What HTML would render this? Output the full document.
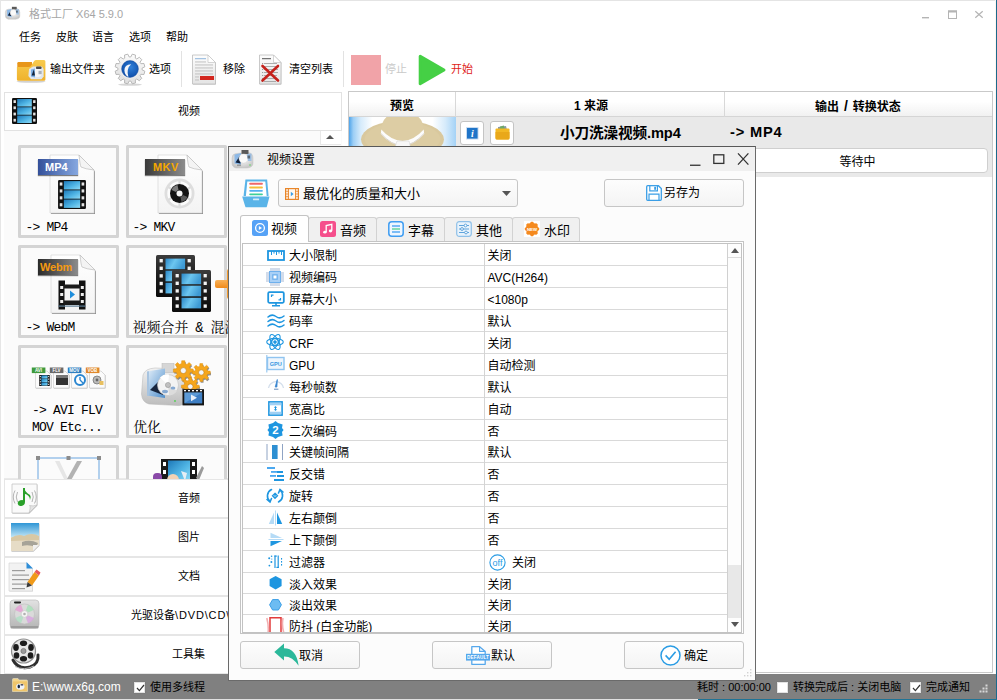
<!DOCTYPE html>
<html lang="zh-CN">
<head>
<meta charset="utf-8">
<title>格式工厂 X64 5.9.0</title>
<style>
*{box-sizing:border-box;margin:0;padding:0}
html,body{width:997px;height:700px;overflow:hidden;background:#fff}
body{position:relative;font-family:"Liberation Sans","Noto Sans CJK SC",sans-serif;font-size:11px;color:#000;line-height:1}
.a{position:absolute}
.t{position:absolute;white-space:nowrap;line-height:14px;height:14px}
svg{position:absolute;overflow:visible}
/* window frame */
#bt{left:0;top:0;width:996px;height:1px;background:#e4e4e4}
#bl{left:0;top:0;width:1px;height:674px;background:#e6e6e6}
#br{left:996px;top:0;width:1px;height:700px;background:#1b6a8c}
#br2{left:995px;top:0;width:1px;height:674px;background:#fdf6f2}
#bb{left:698px;top:699px;width:299px;height:1px;background:#1f7496}
#bb2{left:0;top:699px;width:698px;height:1px;background:#e0e0e0}
#title{left:29px;top:7px;color:#a6a6a6;font-size:11px}
.menu{top:30px;font-size:11px}
.tb{top:62px;font-size:11px}
.sep{width:1px;top:51px;height:36px;background:#e2e2e2}
/* left panel */
#vhead{left:4px;top:92px;width:338px;height:39px;border:1px solid #e2e2e2;background:#fff}
#pbody{left:4px;top:131px;width:338px;height:348px;background:#fbfbfb;border-bottom:1px solid #eaeaea}
.tile{width:101px;height:93px;border:3px solid #d4d4d4;background:#fbfbfb;border-radius:1.5px;overflow:hidden}
.tl{position:absolute;white-space:nowrap;font-family:"Liberation Mono","Noto Serif CJK SC",monospace;font-size:13px;letter-spacing:-0.8px;line-height:14px;color:#000}
.tc{position:absolute;white-space:nowrap;font-family:"Liberation Mono","Noto Serif CJK SC",serif;font-size:14px;line-height:16px;color:#000}
.cat{left:4px;width:338px;height:39px;border:1px solid #e6e6e6;background:#fff}
.catt{font-size:11px}
/* status */
#status{left:0;top:674px;width:996px;height:25px;background:#808080}
.cb{width:11px;height:11px;background:#fff;border:1px solid #e2e2e2;top:682px;box-shadow:0 0 1px #6e6e6e}
/* table */
#table{left:348px;top:91px;width:645px;height:582px;border:1px solid #c9c9c9;background:#fff}
#thead{left:349px;top:92px;width:643px;height:25px;background:linear-gradient(#fff 40%,#f1f1f1);border-bottom:1px solid #d5d5d5}
.th{top:98.5px;font-weight:bold;font-size:12px}
.cs{top:92px;width:1px;height:25px;background:#d8d8d8}
#row{left:349px;top:117px;width:643px;height:60px;background:#e9e9e9}
.sbtn{width:24px;height:24px;top:121px;background:#fff;border:1px solid #c4c4c4;border-radius:3px}
/* dialog */
#dlg{left:228px;top:146px;width:528px;height:535px;border:1px solid #6a6a6a;border-top-color:#585858;background:#fcfcfc}
#dtitle{left:229px;top:147px;width:526px;height:24px;background:#f0f0f0}
.btn{border:1px solid #c6c6c6;border-radius:3px;background:linear-gradient(#fdfdfd,#f4f4f4)}
.tab{top:217px;height:24px;border:1px solid #d2d2d2;border-bottom:none;background:#f0f0f0;border-radius:3px 3px 0 0}
.tabt{font-size:13px;top:222px;line-height:15px;height:15px}
#list{left:242px;top:243px;width:500px;height:390px;border:1px solid #c2c2c2;background:#fff;overflow:hidden}
.r{position:absolute;left:0;width:484px;border-bottom:1px solid #d9d9d9;height:22px}
.r .k{position:absolute;left:46px;top:4px;font-size:12px;line-height:16px;white-space:nowrap}
.r .v{position:absolute;left:244.5px;top:4px;font-size:12px;line-height:16px;white-space:nowrap}
.r svg{left:24px;top:2px}
</style>
</head>
<body>
<!-- frame -->
<div class="a" id="bt"></div><div class="a" id="bl"></div><div class="a" id="br2"></div><div class="a" id="br"></div>

<!-- TITLEBAR -->
<div class="t" id="title">格式工厂 X64 5.9.0</div>


<!-- title icon -->
<svg style="left:4.2px;top:5.6px" width="16.5" height="14" viewBox="0 0 24 20">
 <defs><radialGradient id="tig" cx="50%" cy="40%" r="65%"><stop offset="0" stop-color="#ffffff"/><stop offset="1" stop-color="#c2c2c2"/></radialGradient></defs>
 <path d="M2 9 Q2 5 6 4.5 L18 3.5 Q23 4 23 9 L23 14 Q23 18.5 17 19 L6 19 Q1.5 18 2 13 Z" fill="url(#tig)" stroke="#c4c4c4" stroke-width=".6"/>
 <rect x="11.5" y="1" width="7" height="4" fill="#5a5a5a"/>
 <path d="M4.5 5.5 L11 4 L11 16 L4.5 14.5 Z" fill="#8cb8e6"/>
 <path d="M5.5 13.5 L10 6.5 L10.5 14.5 Z" fill="#10203a"/>
 <circle cx="13.5" cy="9.5" r="4.6" fill="#fafafa" stroke="#d0d0d0" stroke-width=".5"/>
 <path d="M17 5 L21.5 4.5 L21.5 12 L18 12 Z" fill="#8cb8e6" opacity=".8"/>
 <rect x="17.5" y="6.5" width="2.6" height="3" fill="#5a6a7a"/>
</svg>
<!-- window controls -->
<svg style="left:915px;top:5px" width="75" height="20" viewBox="0 0 75 20">
 <rect x="7" y="12" width="7" height="1.4" fill="#b4b4b4"/>
 <rect x="33.5" y="6" width="8" height="7.5" fill="none" stroke="#b4b4b4" stroke-width="1"/>
 <rect x="33" y="5.5" width="9" height="2" fill="#b4b4b4"/>
 <path d="M60.3 6.3 L67.7 12.7 M67.7 6.3 L60.3 12.7" stroke="#b4b4b4" stroke-width="1.2" fill="none"/>
</svg>

<!-- toolbar: folder -->
<svg style="left:16px;top:59px" width="31" height="24" viewBox="0 0 31 24">
 <defs><linearGradient id="fg1" x1="0" y1="0" x2="0" y2="1"><stop offset="0" stop-color="#f8cb4e"/><stop offset="1" stop-color="#efb22c"/></linearGradient></defs>
 <ellipse cx="15" cy="22.6" rx="14.5" ry="1.2" fill="#000" opacity=".18"/>
 <path d="M1.3 4.2 Q1.3 3 2.5 3 L16 3 L16 9 L1.3 9 Z" fill="#e8961a"/>
 <path d="M.9 8 L12.6 8 Q14.3 8 15.3 6.4 L17.8 2.4 Q18.8 1 20.4 1 L28 1 Q29.4 1 29.4 2.5 L29.4 20.4 Q29.4 21.8 28 21.8 L2.4 21.8 Q.9 21.8 .9 20.4 Z" fill="url(#fg1)"/>
 <path d="M13 10 L17 7.6 L26 7.6 L27.6 10 L27.6 17.5 L25.5 20.2 L15 20.2 L12.4 17 Z" fill="#dfe6ee"/>
 <ellipse cx="21.5" cy="13.6" rx="4.6" ry="4.4" fill="#f6f6f6"/>
 <path d="M15 10.5 L19 9.5 L19 18.5 L15 17.5 Z" fill="#7fb2e6"/>
 <path d="M15.6 16.5 L17.8 10.6 L19 16.5 Z" fill="#14243a"/>
 <rect x="20" y="7.4" width="5.5" height="2.6" rx=".8" fill="#4a4a4a"/>
 <rect x="22.5" y="11.8" width="3.2" height="3.4" fill="#a0a8b0" opacity=".9"/>
</svg>
<!-- toolbar: gear -->
<svg style="left:114px;top:53px" width="32" height="33" viewBox="-16 -16 32 33">
 <defs><radialGradient id="gg1" cx="55%" cy="40%" r="65%"><stop offset="0" stop-color="#2f7fd8"/><stop offset="1" stop-color="#0b4aa6"/></radialGradient>
 <linearGradient id="gg2" x1="0" y1="0" x2="0" y2="1"><stop offset="0" stop-color="#fbfbfb"/><stop offset="1" stop-color="#dedede"/></linearGradient></defs>
 <ellipse cx="0" cy="15.6" rx="12" ry="1.2" fill="#000" opacity=".16"/>
 <path d="M-2.31 -11.88 L-1.70 -14.90 L1.70 -14.90 L2.31 -11.88 L3.94 -11.44 L5.98 -13.76 L8.92 -12.06 L7.94 -9.13 L9.13 -7.94 L12.06 -8.92 L13.76 -5.98 L11.44 -3.94 L11.88 -2.31 L14.90 -1.70 L14.90 1.70 L11.88 2.31 L11.44 3.94 L13.76 5.98 L12.06 8.92 L9.13 7.94 L7.94 9.13 L8.92 12.06 L5.98 13.76 L3.94 11.44 L2.31 11.88 L1.70 14.90 L-1.70 14.90 L-2.31 11.88 L-3.94 11.44 L-5.98 13.76 L-8.92 12.06 L-7.94 9.13 L-9.13 7.94 L-12.06 8.92 L-13.76 5.98 L-11.44 3.94 L-11.88 2.31 L-14.90 1.70 L-14.90 -1.70 L-11.88 -2.31 L-11.44 -3.94 L-13.76 -5.98 L-12.06 -8.92 L-9.13 -7.94 L-7.94 -9.13 L-8.92 -12.06 L-5.98 -13.76 L-3.94 -11.44 Z" fill="url(#gg2)" stroke="#b0b0b0" stroke-width=".8" stroke-linejoin="round" transform="rotate(15)"/>
 <circle r="9.6" fill="#f2f2f2"/>
 <circle r="8.4" fill="url(#gg1)" stroke="#1a4f9c" stroke-width=".5"/>
 <path d="M1.2 -4.8 Q-5.8 -4.4 -5.6 1.5 Q-5.2 6.4 -1.6 8 Q-2.8 4 -2.2 1 Q-1.6 -2.6 1.2 -4.8 Z" fill="#f4f6fa"/>
</svg>
<!-- toolbar: remove doc -->
<svg style="left:191px;top:54px" width="26" height="32" viewBox="0 0 26 32">
 <defs><linearGradient id="dg1" x1="0" y1="0" x2="0" y2="1"><stop offset="0" stop-color="#fdfdfd"/><stop offset="1" stop-color="#e4e4e4"/></linearGradient></defs>
 <path d="M1.5 1 L17 1 L24.5 8.5 L24.5 30 L1.5 30 Z" fill="#000" opacity=".18" transform="translate(.4 .8)"/>
 <path d="M1.5 1 L17 1 L24.5 8.5 L24.5 30 L1.5 30 Z" fill="url(#dg1)" stroke="#bdbdbd" stroke-width=".8"/>
 <path d="M17 1 L17 8.5 L24.5 8.5 Z" fill="#fff" stroke="#c4c4c4" stroke-width=".7"/>
 <rect x="4" y="4.2" width="11" height="1" fill="#8fb6dc"/>
 <g fill="#bcbcbc"><rect x="4" y="7.5" width="11" height=".9"/><rect x="4" y="10.5" width="18" height=".9"/><rect x="4" y="13.5" width="18" height=".9"/><rect x="4" y="16.5" width="18" height=".9"/><rect x="4" y="19.5" width="18" height=".9"/><rect x="4" y="22.5" width="4" height=".9"/><rect x="4" y="25.5" width="4" height=".9"/></g>
 <rect x="9" y="22" width="14" height="4" fill="#d3271f"/>
</svg>
<!-- toolbar: clear doc -->
<svg style="left:258px;top:54px" width="25" height="32" viewBox="0 0 25 32">
 <path d="M1.5 1 L15.5 1 L23 8.5 L23 30 L1.5 30 Z" fill="#000" opacity=".18" transform="translate(.4 .8)"/>
 <path d="M1.5 1 L15.5 1 L23 8.5 L23 30 L1.5 30 Z" fill="url(#dg1)" stroke="#bdbdbd" stroke-width=".8"/>
 <path d="M15.5 1 L15.5 8.5 L23 8.5 Z" fill="#fff" stroke="#c4c4c4" stroke-width=".7"/>
 <rect x="4" y="4.2" width="9" height="1" fill="#555"/>
 <g fill="#9a9a9a"><rect x="4" y="9" width="1.2" height="1"/><rect x="6" y="9" width="13" height=".8"/><rect x="4" y="12" width="1.2" height="1"/><rect x="6" y="12" width="13" height=".8"/><rect x="4" y="15" width="1.2" height="1"/><rect x="6" y="15" width="14" height=".8"/><rect x="4" y="18" width="1.2" height="1"/><rect x="6" y="18" width="14" height=".8"/><rect x="4" y="21" width="1.2" height="1"/><rect x="6" y="21" width="13" height=".8"/><rect x="4" y="24" width="1.2" height="1"/><rect x="6" y="24" width="11" height=".8"/><rect x="4" y="27" width="1.2" height="1"/><rect x="6" y="27" width="12" height=".8"/></g>
 <path d="M4.5 12 L20 26.5 M20 12 L4.5 26.5" stroke="#c5221c" stroke-width="2.6" stroke-linecap="round" fill="none"/>
</svg>
<!-- toolbar: play -->
<svg style="left:418px;top:54px" width="29" height="32" viewBox="0 0 29 32">
 <path d="M2.2 2.2 L26 16 L2.2 29.8 Z" fill="#45d045" stroke="#45d045" stroke-width="3" stroke-linejoin="round"/>
</svg>

<!-- MENU -->
<div class="t menu" style="left:19px">任务</div>
<div class="t menu" style="left:56px">皮肤</div>
<div class="t menu" style="left:92px">语言</div>
<div class="t menu" style="left:129px">选项</div>
<div class="t menu" style="left:166px">帮助</div>

<!-- TOOLBAR -->
<div class="t tb" style="left:50px">输出文件夹</div>
<div class="t tb" style="left:149px">选项</div>
<div class="a sep" style="left:181px"></div>
<div class="t tb" style="left:223px">移除</div>
<div class="t tb" style="left:289px">清空列表</div>
<div class="a sep" style="left:343px"></div>
<div class="a" style="left:351px;top:55px;width:30px;height:30px;background:#f1a3a8"></div>
<div class="t tb" style="left:385px;color:#c9c9c9">停止</div>
<div class="t tb" style="left:451px;color:#e0241b">开始</div>

<!-- LEFT PANEL -->
<div class="a" id="pbody"></div>
<div class="a" id="vhead"></div>
<div class="t catt" style="left:178px;top:104px">视频</div>


<svg width="0" height="0" style="left:0;top:0">
 <defs>
  <linearGradient id="fb" x1="0" y1="0" x2="1" y2="1"><stop offset="0" stop-color="#1d78b8"/><stop offset=".55" stop-color="#4fb4e4"/><stop offset="1" stop-color="#8fdaf6"/></linearGradient>
  <linearGradient id="pg" x1="0" y1="0" x2="0" y2="1"><stop offset="0" stop-color="#ffffff"/><stop offset="1" stop-color="#f3f3f3"/></linearGradient>
  <linearGradient id="bdg" x1="0" y1="0" x2="1" y2="0"><stop offset="0" stop-color="#2a2a2a"/><stop offset="1" stop-color="#8a8a8a"/></linearGradient>
  <linearGradient id="bdb" x1="0" y1="0" x2="1" y2="0"><stop offset="0" stop-color="#34509a"/><stop offset="1" stop-color="#7da0dc"/></linearGradient>
  <linearGradient id="fb2" x1="0" y1="0" x2="1" y2="0.3"><stop offset="0" stop-color="#2a86c6"/><stop offset=".5" stop-color="#6cc6f0"/><stop offset="1" stop-color="#3e9ad4"/></linearGradient>
  <linearGradient id="fk" x1="0" y1="0" x2="0" y2="1"><stop offset="0" stop-color="#3c3c3c"/><stop offset=".5" stop-color="#1c1c1c"/><stop offset="1" stop-color="#0c0c0c"/></linearGradient>
  <symbol id="film5" viewBox="0 0 39 42">
   <rect x="0" y="0" width="39" height="42" rx="1.5" fill="url(#fk)"/>
   <g fill="#f4f4f4"><rect x="3.6" y="4.0" width="3.2" height="3.4"/><rect x="31.6" y="4.0" width="3.2" height="3.4"/><rect x="3.6" y="11.6" width="3.2" height="3.4"/><rect x="31.6" y="11.6" width="3.2" height="3.4"/><rect x="3.6" y="19.2" width="3.2" height="3.4"/><rect x="31.6" y="19.2" width="3.2" height="3.4"/><rect x="3.6" y="26.8" width="3.2" height="3.4"/><rect x="31.6" y="26.8" width="3.2" height="3.4"/><rect x="3.6" y="34.4" width="3.2" height="3.4"/><rect x="31.6" y="34.4" width="3.2" height="3.4"/></g>
   <g fill="url(#fb2)"><rect x="9.5" y="3.6" width="19.6" height="10.6"/><rect x="9.5" y="15.7" width="19.6" height="10.6"/><rect x="9.5" y="27.8" width="19.6" height="10.6"/></g>
  </symbol>
  <symbol id="film" viewBox="0 0 25 26">
   <rect x="0" y="0" width="25" height="26" rx="1.2" fill="#101010"/>
   <g fill="#e4e4e4"><rect x="1.5" y="2.2" width="2.4" height="2.8"/><rect x="1.5" y="8.4" width="2.4" height="2.8"/><rect x="1.5" y="14.6" width="2.4" height="2.8"/><rect x="1.5" y="20.8" width="2.4" height="2.8"/>
   <rect x="21.1" y="2.2" width="2.4" height="2.8"/><rect x="21.1" y="8.4" width="2.4" height="2.8"/><rect x="21.1" y="14.6" width="2.4" height="2.8"/><rect x="21.1" y="20.8" width="2.4" height="2.8"/></g>
   <g fill="url(#fb)"><rect x="5.2" y="1" width="14.6" height="7.5"/><rect x="5.2" y="9.25" width="14.6" height="7.5"/><rect x="5.2" y="17.5" width="14.6" height="7.5"/></g>
  </symbol>
  <symbol id="page" viewBox="0 0 46 60">
   <path d="M1 1 L30 1 L45 16 L45 59 L1 59 Z" fill="#000" opacity=".42" transform="translate(1 1.2)"/>
   <path d="M1 1 L30 1 Q33 9 45 16 L45 59 L1 59 Z" fill="url(#pg)" stroke="#d0d0d0" stroke-width=".6"/>
   <path d="M30 1 Q31 11 32 13 Q36 15 45 16 Z" fill="#f4f4f4" stroke="#bdbdbd" stroke-width=".7"/>
  </symbol>
 </defs>
</svg>
<svg style="left:11.5px;top:97.5px" width="25" height="26"><use href="#film" width="25" height="26"/></svg>
<div class="a" style="left:320px;top:131px;width:21px;height:14px;background:#fff;border-bottom:1px solid #e8e8e8;border-left:1px solid #e8e8e8"></div>
<svg style="left:326px;top:135px" width="8" height="4" viewBox="0 0 8 4"><path d="M0 4 L4 0 L8 4 Z" fill="#555"/></svg>
<div class="a tile" style="left:18px;top:145px"></div>
<div class="a tile" style="left:126px;top:145px"></div>
<div class="a tile" style="left:18px;top:245px"></div>
<div class="a tile" style="left:126px;top:245px"></div>
<div class="a tile" style="left:18px;top:345px"></div>
<div class="a tile" style="left:126px;top:345px"></div>
<div class="a tile" style="left:18px;top:445px"></div>
<div class="a tile" style="left:126px;top:445px"></div>

<svg style="left:49px;top:153.5px" width="47" height="61"><use href="#page" width="46" height="60"/></svg>
<div class="a" style="left:37.5px;top:159px;width:40px;height:16px;background:linear-gradient(90deg,#34509a,#86a8e0);box-shadow:0 1px 1px rgba(0,0,0,.5)"></div>
<div class="t" style="left:45px;top:160px;color:#fff;font-weight:bold;font-size:11px">MP4</div>
<svg style="left:58px;top:180px" width="28" height="29"><use href="#film" width="28" height="29"/></svg>
<div class="tl" style="left:25.5px;top:221px">-&gt; MP4</div>

<svg style="left:157px;top:153.5px" width="47" height="61"><use href="#page" width="46" height="60"/></svg>
<div class="a" style="left:145px;top:159px;width:40px;height:16px;background:linear-gradient(90deg,#3a3a3a,#8c8c8c);box-shadow:0 1px 1px rgba(0,0,0,.5)"></div>
<div class="t" style="left:153px;top:160px;color:#f5a800;font-weight:bold;font-size:11px;letter-spacing:.4px">MKV</div>
<svg style="left:164px;top:178px" width="31" height="31" viewBox="-15.5 -15.5 31 31">
 <circle r="13.6" fill="#fbfbfb" stroke="#dedede" stroke-width="2.8"/>
 <g stroke="#dcdcdc" stroke-width="2.2"><path d="M0 -13 L0 13 M-11.3 -6.5 L11.3 6.5 M-11.3 6.5 L11.3 -6.5"/></g>
 <circle r="9.5" fill="#141414"/>
 <path d="M-8 -3.5 A8.8 8.8 0 0 1 -2 -8.5 L-1 -3.6 A3.6 3.6 0 0 0 -3.4 -1.6 Z" fill="#7c7c7c"/>
 <path d="M8 3.5 A8.8 8.8 0 0 1 2 8.5 L1 3.6 A3.6 3.6 0 0 0 3.4 1.6 Z" fill="#5a5a5a"/>
 <circle r="3" fill="#f6f6f6"/>
</svg>
<div class="tl" style="left:132.5px;top:221px">-&gt; MKV</div>

<svg style="left:49.5px;top:254px" width="47" height="61"><use href="#page" width="46" height="60"/></svg>
<div class="a" style="left:37.5px;top:259px;width:40px;height:16px;background:linear-gradient(90deg,#2a2a2a,#8c8c8c);box-shadow:0 1px 1px rgba(0,0,0,.5)"></div>
<div class="t" style="left:40px;top:260px;color:#f59a12;font-weight:bold;font-size:11px;letter-spacing:-.2px">Webm</div>
<svg style="left:58px;top:279.5px" width="28" height="30" viewBox="0 0 28 30">
 <rect x="0.5" y="0.5" width="6.5" height="29" fill="#111"/><rect x="21" y="0.5" width="6.5" height="29" fill="#111"/>
 <rect x="6" y="4.5" width="16" height="20.5" fill="#1a1a1a"/>
 <rect x="6.5" y="8.5" width="15" height="12" fill="#f4f4f4"/>
 <path d="M12 10.5 L17 14.5 L12 18.5 Z" fill="#1e8edc"/>
 <g fill="#eee"><rect x="2.2" y="6" width="3" height="3"/><rect x="2.2" y="13" width="3" height="3"/><rect x="2.2" y="20" width="3" height="3"/><rect x="22.8" y="6" width="3" height="3"/><rect x="22.8" y="13" width="3" height="3"/><rect x="22.8" y="20" width="3" height="3"/></g>
 <rect x="0.5" y="25.5" width="27" height="1.2" fill="#5a7a92"/>
</svg>
<div class="tl" style="left:25.5px;top:321px">-&gt; WebM</div>

<svg style="left:156.3px;top:255.2px" width="39" height="42"><use href="#film5" width="39" height="42"/></svg>
<svg style="left:172px;top:270.2px" width="39" height="42"><use href="#film5" width="39" height="42"/></svg>
<div class="a" style="left:215.4px;top:279.5px;width:14px;height:8.5px;background:linear-gradient(#f8b25a,#f08a1a);border-radius:2px"></div>
<div class="a" style="left:226.5px;top:269px;width:6px;height:30px;background:#f39a2e;border-radius:2px"></div>
<div class="tc" style="left:132.5px;top:320px;word-spacing:-1.6px">视频合并 &amp; 混流</div>
<svg style="left:31px;top:367px" width="21" height="22" viewBox="0 0 21 22">
 <path d="M4.5 4 L16 4 L20 8 L20 21 L4.5 21 Z" fill="#000" opacity=".25" transform="translate(.5 .6)"/>
 <path d="M4.5 4 L16 4 L20 8 L20 21 L4.5 21 Z" fill="#fbfbfb" stroke="#c8c8c8" stroke-width=".6"/>
 <rect x="0.8" y="0.5" width="13.6" height="5.6" fill="#3f9a3c"/>
 <text x="7.5" y="5.2" font-size="4.5" font-weight="bold" fill="#fff" text-anchor="middle" font-family="Liberation Sans, sans-serif">AVI</text>
</svg>
<svg style="left:49px;top:367px" width="21" height="22" viewBox="0 0 21 22">
 <path d="M4.5 4 L16 4 L20 8 L20 21 L4.5 21 Z" fill="#000" opacity=".25" transform="translate(.5 .6)"/>
 <path d="M4.5 4 L16 4 L20 8 L20 21 L4.5 21 Z" fill="#fbfbfb" stroke="#c8c8c8" stroke-width=".6"/>
 <rect x="0.8" y="0.5" width="13.6" height="5.6" fill="#6a6a6a"/>
 <text x="7.5" y="5.2" font-size="4.5" font-weight="bold" fill="#fff" text-anchor="middle" font-family="Liberation Sans, sans-serif">FLV</text>
</svg>
<svg style="left:67px;top:367px" width="21" height="22" viewBox="0 0 21 22">
 <path d="M4.5 4 L16 4 L20 8 L20 21 L4.5 21 Z" fill="#000" opacity=".25" transform="translate(.5 .6)"/>
 <path d="M4.5 4 L16 4 L20 8 L20 21 L4.5 21 Z" fill="#fbfbfb" stroke="#c8c8c8" stroke-width=".6"/>
 <rect x="0.8" y="0.5" width="13.6" height="5.6" fill="#2f7fc0"/>
 <text x="7.5" y="5.2" font-size="4.5" font-weight="bold" fill="#fff" text-anchor="middle" font-family="Liberation Sans, sans-serif">MOV</text>
</svg>
<svg style="left:85px;top:367px" width="21" height="22" viewBox="0 0 21 22">
 <path d="M4.5 4 L16 4 L20 8 L20 21 L4.5 21 Z" fill="#000" opacity=".25" transform="translate(.5 .6)"/>
 <path d="M4.5 4 L16 4 L20 8 L20 21 L4.5 21 Z" fill="#fbfbfb" stroke="#c8c8c8" stroke-width=".6"/>
 <rect x="0.8" y="0.5" width="13.6" height="5.6" fill="#e0882c"/>
 <text x="7.5" y="5.2" font-size="4.5" font-weight="bold" fill="#fff" text-anchor="middle" font-family="Liberation Sans, sans-serif">VOB</text>
</svg>

<svg style="left:38.5px;top:374.5px" width="11" height="11"><use href="#film" width="11" height="11"/></svg>
<div class="a" style="left:56px;top:375px;width:12px;height:10px;background:#333;border-top:3px solid #777"></div>
<svg style="left:74px;top:373.5px" width="12" height="12" viewBox="-6 -6 12 12"><circle r="5" fill="#fff" stroke="#2a86d0" stroke-width="2"/><path d="M0 0 L0 -3 M0 0 L3.5 3.5" stroke="#2a86d0" stroke-width="1.4"/></svg>
<svg style="left:92px;top:375px" width="12" height="11" viewBox="0 0 12 11"><circle cx="5" cy="5" r="4" fill="#bbb" stroke="#777" stroke-width=".8"/><circle cx="5" cy="5" r="1.4" fill="#666"/><rect x="7.5" y="6" width="4" height="4" fill="#e8c060"/></svg>
<div class="tl" style="left:32px;top:404px">-&gt; AVI FLV</div>
<div class="tl" style="left:32px;top:420.5px">MOV Etc...</div>

<svg style="left:139px;top:360px" width="73" height="48" viewBox="0 0 73 48">
 <defs><linearGradient id="og1" x1="0" y1="0" x2="0" y2="1"><stop offset="0" stop-color="#f2f2f2"/><stop offset="1" stop-color="#bcbcbc"/></linearGradient>
 <linearGradient id="og2" x1="0" y1="0" x2="1" y2="1"><stop offset="0" stop-color="#e4f0fa"/><stop offset="1" stop-color="#4f8ecb"/></linearGradient></defs>
 <path d="M4 15 Q6 8.5 16 8 L40 9 Q46 10 46 16 L46 40 Q46 45 40 45.6 L10 44 Q3 42 2.5 34 Z" fill="url(#og1)" stroke="#b4b4b4" stroke-width=".5"/>
 <rect x="23" y="3.5" width="12" height="9" fill="#d6d6d6" stroke="#b8b8b8" stroke-width=".5"/>
 <path d="M8 11.5 L26 8.5 L26 38 L8 35.5 Z" fill="url(#og2)"/>
 <path d="M8 11.5 L10 11.2 L10 35.8 L8 35.5 Z" fill="#a8c4e0"/>
 <path d="M11 30 L24 17 L24 35 Z" fill="#18263e"/>
 <circle cx="29" cy="25" r="10.5" fill="#f3f3f3" stroke="#c6c6c6" stroke-width=".7"/>
 <path d="M29 25 L21 17.5 A10.5 10.5 0 0 1 30 14.5 Z" fill="#fff"/>
 <path d="M29 25 L38 31 A10.5 10.5 0 0 1 30 35.5 Z" fill="#dcdcdc"/>
 <circle cx="29" cy="25" r="2.6" fill="#bfbfbf" stroke="#8e8e8e" stroke-width=".5"/>
 <ellipse cx="26" cy="31.5" rx="3" ry="1.8" fill="#86a9d2"/><ellipse cx="34" cy="28" rx="2.4" ry="1.5" fill="#86a9d2"/>
 <circle cx="36" cy="41" r=".9" fill="#4fd04f"/>
 <path d="M42.56 3.61 L42.74 0.72 L45.86 0.72 L46.04 3.61 L48.01 4.43 L50.18 2.51 L52.39 4.72 L50.47 6.89 L51.29 8.86 L54.18 9.04 L54.18 12.16 L51.29 12.34 L50.47 14.31 L52.39 16.48 L50.18 18.69 L48.01 16.77 L46.04 17.59 L45.86 20.48 L42.74 20.48 L42.56 17.59 L40.59 16.77 L38.42 18.69 L36.21 16.48 L38.13 14.31 L37.31 12.34 L34.42 12.16 L34.42 9.04 L37.31 8.86 L38.13 6.89 L36.21 4.72 L38.42 2.51 L40.59 4.43 Z" fill="#3a3a3a" opacity=".55" transform="translate(.8 1.4)"/><path d="M42.56 3.61 L42.74 0.72 L45.86 0.72 L46.04 3.61 L48.01 4.43 L50.18 2.51 L52.39 4.72 L50.47 6.89 L51.29 8.86 L54.18 9.04 L54.18 12.16 L51.29 12.34 L50.47 14.31 L52.39 16.48 L50.18 18.69 L48.01 16.77 L46.04 17.59 L45.86 20.48 L42.74 20.48 L42.56 17.59 L40.59 16.77 L38.42 18.69 L36.21 16.48 L38.13 14.31 L37.31 12.34 L34.42 12.16 L34.42 9.04 L37.31 8.86 L38.13 6.89 L36.21 4.72 L38.42 2.51 L40.59 4.43 Z" fill="#f5a61c" stroke="#e0900c" stroke-width=".5" stroke-linejoin="round"/><circle cx="44.3" cy="10.6" r="3.00" fill="#f2f6fb" stroke="#c47a08" stroke-width=".6"/><path d="M60.73 6.21 L60.89 3.61 L63.71 3.61 L63.87 6.21 L65.64 6.95 L67.59 5.22 L69.58 7.21 L67.85 9.16 L68.59 10.93 L71.19 11.09 L71.19 13.91 L68.59 14.07 L67.85 15.84 L69.58 17.79 L67.59 19.78 L65.64 18.05 L63.87 18.79 L63.71 21.39 L60.89 21.39 L60.73 18.79 L58.96 18.05 L57.01 19.78 L55.02 17.79 L56.75 15.84 L56.01 14.07 L53.41 13.91 L53.41 11.09 L56.01 10.93 L56.75 9.16 L55.02 7.21 L57.01 5.22 L58.96 6.95 Z" fill="#3a3a3a" opacity=".55" transform="translate(.8 1.4)"/><path d="M60.73 6.21 L60.89 3.61 L63.71 3.61 L63.87 6.21 L65.64 6.95 L67.59 5.22 L69.58 7.21 L67.85 9.16 L68.59 10.93 L71.19 11.09 L71.19 13.91 L68.59 14.07 L67.85 15.84 L69.58 17.79 L67.59 19.78 L65.64 18.05 L63.87 18.79 L63.71 21.39 L60.89 21.39 L60.73 18.79 L58.96 18.05 L57.01 19.78 L55.02 17.79 L56.75 15.84 L56.01 14.07 L53.41 13.91 L53.41 11.09 L56.01 10.93 L56.75 9.16 L55.02 7.21 L57.01 5.22 L58.96 6.95 Z" fill="#f5a61c" stroke="#e0900c" stroke-width=".5" stroke-linejoin="round"/><circle cx="62.3" cy="12.5" r="2.70" fill="#f2f6fb" stroke="#c47a08" stroke-width=".6"/><path d="M49.73 20.31 L49.89 17.71 L52.71 17.71 L52.87 20.31 L54.64 21.05 L56.59 19.32 L58.58 21.31 L56.85 23.26 L57.59 25.03 L60.19 25.19 L60.19 28.01 L57.59 28.17 L56.85 29.94 L58.58 31.89 L56.59 33.88 L54.64 32.15 L52.87 32.89 L52.71 35.49 L49.89 35.49 L49.73 32.89 L47.96 32.15 L46.01 33.88 L44.02 31.89 L45.75 29.94 L45.01 28.17 L42.41 28.01 L42.41 25.19 L45.01 25.03 L45.75 23.26 L44.02 21.31 L46.01 19.32 L47.96 21.05 Z" fill="#3a3a3a" opacity=".55" transform="translate(.8 1.4)"/><path d="M49.73 20.31 L49.89 17.71 L52.71 17.71 L52.87 20.31 L54.64 21.05 L56.59 19.32 L58.58 21.31 L56.85 23.26 L57.59 25.03 L60.19 25.19 L60.19 28.01 L57.59 28.17 L56.85 29.94 L58.58 31.89 L56.59 33.88 L54.64 32.15 L52.87 32.89 L52.71 35.49 L49.89 35.49 L49.73 32.89 L47.96 32.15 L46.01 33.88 L44.02 31.89 L45.75 29.94 L45.01 28.17 L42.41 28.01 L42.41 25.19 L45.01 25.03 L45.75 23.26 L44.02 21.31 L46.01 19.32 L47.96 21.05 Z" fill="#f5a61c" stroke="#e0900c" stroke-width=".5" stroke-linejoin="round"/><circle cx="51.3" cy="26.6" r="2.70" fill="#f2f6fb" stroke="#c47a08" stroke-width=".6"/>
 <rect x="43.5" y="29.2" width="21.5" height="16.2" fill="#161616"/>
 <rect x="45.3" y="32.4" width="17.8" height="10.8" fill="#5c9ad6"/>
 <path d="M45.3 43.2 L63.1 32.4 L63.1 43.2 Z" fill="#3f7fc4"/>
 <path d="M52 34.4 L58 37.8 L52 41.2 Z" fill="#e6eef8"/>
 <g fill="#fff"><rect x="45" y="30" width="2" height="1.3"/><rect x="49" y="30" width="2" height="1.3"/><rect x="53" y="30" width="2" height="1.3"/><rect x="57" y="30" width="2" height="1.3"/><rect x="61" y="30" width="2" height="1.3"/></g>
</svg>
<div class="tc" style="left:133px;top:419.5px">优化</div>

<svg style="left:36px;top:455px" width="66" height="30" viewBox="0 0 66 30">
 <path d="M19 6 L23.5 6 L32 24 L29.5 27 Z" fill="#e6e6e6"/>
 <path d="M41 6 L46 6 L34 27 L31 24 Z" fill="#b2b2b2"/>
 <rect x="2" y="3" width="61" height="40" fill="none" stroke="#82b4e4" stroke-width="1.2"/>
 <g fill="#8c8c8c"><rect x="0" y="1" width="4" height="4"/><rect x="30.5" y="1" width="4" height="4"/><rect x="61" y="1" width="4" height="4"/></g>
</svg>
<svg style="left:161px;top:459px" width="36" height="26" viewBox="0 0 36 26">
 <rect x="0" y="0" width="36" height="26" fill="#1a1a1a"/>
 <rect x="7" y="1.5" width="22" height="20" fill="url(#fb)"/>
 <g fill="#fff"><rect x="2" y="3" width="3" height="4"/><rect x="2" y="11" width="3" height="4"/><rect x="31" y="3" width="3" height="4"/><rect x="31" y="11" width="3" height="4"/></g>
 <ellipse cx="12" cy="21" rx="6" ry="6" fill="#f2d2b4"/>
 <path d="M20 12 L24 22 L26 14 Z" fill="#e6eef4"/>
</svg>
<div class="a" style="left:153px;top:473px;width:9px;height:7px;background:#8a4aa8;border-radius:4px 4px 0 0"></div>
<svg style="left:196px;top:464px" width="8" height="16" viewBox="0 0 8 16"><path d="M0 14 L6 2 L8 4 L3 16 Z" fill="#9a9a9a"/></svg>
<div class="a cat" style="top:479px"></div>
<div class="a cat" style="top:518px"></div>
<div class="a cat" style="top:557px"></div>
<div class="a cat" style="top:596px"></div>
<div class="a cat" style="top:635px"></div>
<div class="t catt" style="left:178px;top:491px">音频</div>
<div class="t catt" style="left:178px;top:530px">图片</div>
<div class="t catt" style="left:178px;top:569px">文档</div>
<div class="t catt" style="left:131px;top:608px">光驱设备<span style="letter-spacing:.85px">\DVD\CD\ISO</span></div>
<div class="t catt" style="left:172px;top:647px">工具集</div>

<svg style="left:10.5px;top:482.5px" width="28" height="31" viewBox="0 0 28 31">
 <path d="M1 1 L26 1 L26 22 L18 30 L1 30 Z" fill="#000" opacity=".2" transform="translate(.5 .7)"/>
 <path d="M1 1 L26 1 L26 22 L18 30 L1 30 Z" fill="#fafafa" stroke="#c4c4c4" stroke-width=".8"/>
 <path d="M26 22 L18 30 Q20 24 18.5 22.5 Q22 23.5 26 22 Z" fill="#e4e4e4" stroke="#bbb" stroke-width=".6"/>
 <path d="M13 5 L13 19.5" stroke="#2aa02a" stroke-width="2" fill="none"/>
 <path d="M13 5 Q14 9 19 12 Q20.5 14 19 17 Q19 12 13 10.5 Z" fill="#2aa02a"/>
 <ellipse cx="10.3" cy="20" rx="3.6" ry="2.8" fill="#2aa02a" transform="rotate(-20 10.3 20)"/>
 <path d="M6.5 9 Q4 14 6.5 19 M4 7.5 Q0.5 14 4 20.5" stroke="#b4b4b4" stroke-width="1" fill="none"/>
 <path d="M21 9 Q23.5 14 21 19 M23.5 7.5 Q27 14 23.5 20.5" stroke="#b4b4b4" stroke-width="1" fill="none"/>
</svg>
<!-- picture icon -->
<svg style="left:9.5px;top:522px" width="30" height="30" viewBox="0 0 30 30">
 <defs><linearGradient id="sky" x1="0" y1="0" x2="0" y2="1"><stop offset="0" stop-color="#2f96d6"/><stop offset="1" stop-color="#bfe4f4"/></linearGradient></defs>
 <path d="M1 1 L29 1 L29 23 L23 29 L1 29 Z" fill="#000" opacity=".25" transform="translate(.5 .7)"/>
 <path d="M1 1 L29 1 L29 23 L23 29 L1 29 Z" fill="#e6dcc6"/>
 <path d="M1 1 L29 1 L29 15 L1 15 Z" fill="url(#sky)"/>
 <path d="M1 16 Q8 11 14 14 Q22 10 29 14 L29 18 L1 19 Z" fill="#d8c8a4"/>
 <path d="M12 20 Q20 17 28 21 L26 25 Q18 22 12 24 Z" fill="#8a8a84" opacity=".7"/>
 <path d="M29 23 L23 29 L23 23 Z" fill="#f0f0f0"/>
</svg>
<!-- document icon -->
<svg style="left:8px;top:560.5px" width="33" height="32" viewBox="0 0 33 32">
 <path d="M1 2 L18.5 2 L24.5 8 L24.5 30 L1 30 Z" fill="#000" opacity=".15" transform="translate(.5 .6)"/>
 <path d="M1 2 L18.5 2 L24.5 8 L24.5 30 L1 30 Z" fill="#f2f2f2" stroke="#d2d2d2" stroke-width=".6"/>
 <path d="M18.5 1 L25 7.5 L18.5 7.5 Z" fill="#2f8ed8"/>
 <g fill="#9c9c9c"><rect x="4" y="9" width="13" height="1.2"/><rect x="4" y="13.5" width="17" height="1.2"/><rect x="4" y="18" width="17" height="1.2"/><rect x="4" y="22.5" width="15" height="1.2"/><rect x="4" y="27" width="13" height="1.2"/></g>
 <path d="M26.5 11 L31 14.5 L24 24.5 L19.5 21 Z" fill="#f09a1a"/>
 <path d="M26.5 11 L28.5 8.5 L32.5 11.5 L31 14.5 Z" fill="#e8575a"/>
 <path d="M19.5 21 L24 24.5 L18.5 26.5 Z" fill="#3a3a3a"/>
</svg>
<!-- dvd icon -->
<svg style="left:9px;top:599px" width="31" height="31" viewBox="0 0 31 31">
 <defs><linearGradient id="dvg" x1="0" y1="0" x2="0" y2="1"><stop offset="0" stop-color="#e2e2e2"/><stop offset="1" stop-color="#b6b6b6"/></linearGradient></defs>
 <rect x="1" y="1" width="29" height="28" rx="3.5" fill="url(#dvg)" stroke="#b4b4b4" stroke-width=".6"/>
 <rect x="1.5" y="27" width="28" height="2.5" rx="1" fill="#9c9c9c"/>
 <rect x="5" y="2.6" width="7" height="1.8" rx=".8" fill="#222"/>
 <circle cx="15.5" cy="15" r="10" fill="#dadada" stroke="#c0c0c0" stroke-width=".6"/>
 <path d="M15.5 15 L6 11 A10 10 0 0 1 12 5.7 Z" fill="#e4a0d4" opacity=".85"/>
 <path d="M15.5 15 L25 19 A10 10 0 0 1 19 24.3 Z" fill="#d8a0e0" opacity=".75"/>
 <path d="M15.5 15 L19 5.7 A10 10 0 0 1 24.7 11 Z" fill="#a8e0b8" opacity=".85"/>
 <path d="M15.5 15 L12 24.3 A10 10 0 0 1 6.3 19 Z" fill="#a8e0c0" opacity=".7"/>
 <circle cx="15.5" cy="15" r="3.4" fill="#f4f4f4" stroke="#c4c4c4" stroke-width=".6"/>
 <circle cx="15.5" cy="15" r="1.3" fill="#b0b0b0"/>
</svg>
<!-- tools icon -->
<svg style="left:10px;top:638px" width="31" height="32" viewBox="0 0 31 32">
 <path d="M3 22 Q8 32 20 29 Q29 26 28 17" fill="none" stroke="#2e2e2e" stroke-width="3" stroke-linecap="round"/>
 <path d="M5 28.5 Q14 33 24 28" fill="none" stroke="#bbb" stroke-width="1"/>
 <circle cx="13.5" cy="13" r="12" fill="#e6e6e6" stroke="#8e8e8e" stroke-width="1.2"/>
 <g fill="#1c1c1c"><ellipse cx="13.5" cy="5.2" rx="3.6" ry="2.8"/><ellipse cx="13.5" cy="20.8" rx="3.6" ry="2.8"/><ellipse cx="6" cy="9.5" rx="2.8" ry="3.4"/><ellipse cx="21" cy="9.5" rx="2.8" ry="3.4"/><ellipse cx="6.5" cy="17.5" rx="2.8" ry="3.2"/><ellipse cx="20.5" cy="17.5" rx="2.8" ry="3.2"/></g>
 <circle cx="13.5" cy="13" r="2.6" fill="#9a9a9a" stroke="#666" stroke-width=".6"/>
</svg>

<!-- TABLE -->
<div class="a" id="table"></div>
<div class="a" id="thead"></div>
<div class="a" id="row"></div>


<div class="a cs" style="left:455px"></div><div class="a cs" style="left:724px"></div>
<div class="t th" style="left:390px">预览</div>
<div class="t th" style="left:574px">1 来源</div>
<div class="t th" style="left:815px;word-spacing:1.6px">输出 <span style="font-size:14px;line-height:14px">/</span> 转换状态</div>
<!-- preview thumb -->
<svg style="left:349px;top:117px" width="107" height="60" viewBox="0 0 107 60">
 <defs><linearGradient id="pv" x1="0" y1="0" x2="1" y2="0"><stop offset="0" stop-color="#4fa4ea"/><stop offset=".04" stop-color="#9ccef5"/><stop offset=".11" stop-color="#d6ebfb"/><stop offset=".22" stop-color="#ffffff"/><stop offset=".78" stop-color="#ffffff"/><stop offset=".9" stop-color="#d6ebfb"/><stop offset="1" stop-color="#a4d2f6"/></linearGradient></defs>
 <rect width="107" height="60" fill="url(#pv)"/>
 <ellipse cx="53.5" cy="22.5" rx="41.5" ry="19" fill="#d9c89d"/>
 <ellipse cx="53.5" cy="22" rx="38" ry="16.5" fill="#dccca2"/>
 <path d="M37.5 0 Q32 5 32.5 14 Q42 24 53.5 24.5 Q65 24 74.5 14 Q75 5 69.5 0 Z" fill="#ddcda4"/>
 <path d="M32.3 12.5 Q42 23.5 53.5 24 Q65 23.5 74.7 12.5 L75.2 17 Q65 28.5 53.5 29 Q42 28.5 31.8 17 Z" fill="#fcfcfc"/>
 <path d="M32 16.5 Q42 28 53.5 28.8 Q65 28 75 16.5" fill="none" stroke="#c9c2b4" stroke-width=".7"/>
 <path d="M48 24 Q44 34 49 40 L54 29 L59 40 Q63 33 60 24 Z" fill="#f7f7f7" stroke="#d6d6d6" stroke-width=".6"/>
</svg>
<div class="a sbtn" style="left:460px"></div><div class="a sbtn" style="left:490px"></div>
<svg style="left:465.5px;top:126.5px" width="12.5" height="12.5" viewBox="0 0 14 14"><rect x=".5" y=".5" width="13" height="13" fill="#1f74c8" stroke="#cfe0f2" stroke-width="1"/><text x="7" y="11.2" font-size="11" font-weight="bold" font-style="italic" fill="#fff" text-anchor="middle" font-family="Liberation Serif, serif">i</text></svg>
<svg style="left:494px;top:124px" width="17" height="17" viewBox="0 0 17 17">
 <path d="M4 3 L12 2 L13 6 L4 6 Z" fill="#8a9aa8"/><path d="M6 2.5 L10 1.5 L10.5 5 L6 5 Z" fill="#6fa86a"/>
 <path d="M1.5 5.5 Q1.5 4.5 2.5 4.5 L14.5 4.5 Q15.5 4.5 15.5 5.5 L15.5 14 Q15.5 15.5 14 15.5 L3 15.5 Q1.5 15.5 1.5 14 Z" fill="#f2b824"/>
 <path d="M1.5 8 L15.5 8 L15.5 14 Q15.5 15.5 14 15.5 L3 15.5 Q1.5 15.5 1.5 14 Z" fill="#e9a81a"/>
</svg>
<div class="t" style="left:560px;top:124px;font-weight:bold;font-size:14.67px;line-height:18px;height:18px;letter-spacing:-.15px">小刀洗澡视频.mp4</div>
<div class="t" style="left:730px;top:123px;font-weight:bold;font-size:14.67px;line-height:18px;height:18px;letter-spacing:.8px">-&gt; MP4</div>
<div class="a" style="left:727px;top:148px;width:261px;height:25px;background:#fff;border:1px solid #cfcfcf;border-radius:4px"></div>
<div class="t" style="left:839.5px;top:154.5px;font-size:12px">等待中</div>

<!-- STATUS -->
<div class="a" id="status"></div>
<div class="a" id="bb2"></div><div class="a" id="bb"></div>


<svg style="left:12px;top:678px" width="16" height="14" viewBox="0 0 16 14">
 <path d="M.5 1.5 Q.5 .5 1.5 .5 L6 .5 L7 2 L14.5 2 Q15.5 2 15.5 3 L15.5 13.5 L.5 13.5 Z" fill="#f4d58a" stroke="#e8e0c8" stroke-width=".6"/>
 <rect x=".8" y="3.4" width="14.4" height="9.8" fill="#efc56a"/>
 <ellipse cx="8.3" cy="8.6" rx="4.2" ry="3.2" fill="#eef2f8"/>
 <ellipse cx="6.8" cy="8.4" rx="1.2" ry="1.9" fill="#14243a"/>
 <rect x="8.6" y="6" width="2.6" height="1.6" fill="#556"/>
</svg>
<div class="t" style="left:32px;top:679.5px;color:#fff;font-size:12px;letter-spacing:0">E:\www.x6g.com</div>
<div class="a cb" style="left:134px"></div>
<svg style="left:135.5px;top:684px" width="9" height="8" viewBox="0 0 9 8"><path d="M1 4 L3.4 6.6 L8 1" stroke="#333" stroke-width="1.2" fill="none"/></svg>
<div class="t" style="left:150px;top:680px">使用多线程</div>
<div class="t" style="left:697px;top:680px">耗时 : 00:00:00</div>
<div class="a cb" style="left:777px"></div>
<div class="t" style="left:793px;top:680px">转换完成后 : 关闭电脑</div>
<div class="a cb" style="left:910px"></div>
<svg style="left:911.5px;top:684px" width="9" height="8" viewBox="0 0 9 8"><path d="M1 4 L3.4 6.6 L8 1" stroke="#333" stroke-width="1.2" fill="none"/></svg>
<div class="t" style="left:926px;top:680px">完成通知</div>
<svg style="left:979px;top:684px" width="10" height="10" viewBox="0 0 10 10"><g fill="#d8d8d8"><rect x="6.5" y=".5" width="2" height="2"/><rect x="3.5" y="3.5" width="2" height="2"/><rect x="6.5" y="3.5" width="2" height="2"/><rect x=".5" y="6.5" width="2" height="2"/><rect x="3.5" y="6.5" width="2" height="2"/><rect x="6.5" y="6.5" width="2" height="2"/></g></svg>

<!-- DIALOG -->
<div class="a" id="dlg"></div>
<div class="a" id="dtitle"></div>

<!-- dialog title -->
<svg style="left:229.8px;top:148.5px" width="24" height="20" viewBox="0 0 24 20">
 <path d="M2 9 Q2 5 6 4.5 L18 3.5 Q23 4 23 9 L23 14 Q23 18.5 17 19 L6 19 Q1.5 18 2 13 Z" fill="url(#tig)" stroke="#c4c4c4" stroke-width=".5"/>
 <rect x="11.5" y="1" width="7" height="4" fill="#5a5a5a"/>
 <path d="M4.5 5.5 L11 4 L11 16 L4.5 14.5 Z" fill="#8cb8e6"/>
 <path d="M5.5 13.5 L10 6.5 L10.5 14.5 Z" fill="#10203a"/>
 <circle cx="13.5" cy="9.5" r="4.6" fill="#fafafa" stroke="#d0d0d0" stroke-width=".4"/>
 <path d="M17 5 L21.5 4.5 L21.5 12 L18 12 Z" fill="#8cb8e6" opacity=".8"/>
 <rect x="17.5" y="6.5" width="2.6" height="3" fill="#5a6a7a"/>
 <rect x="7" y="15.5" width="4" height="1.6" fill="#9a9a9a"/>
 <circle cx="20" cy="16" r=".8" fill="#5fd85f"/>
</svg>
<div class="t" style="left:267px;top:152.5px;font-size:12px">视频设置</div>
<svg style="left:686px;top:150px" width="66" height="18" viewBox="0 0 66 18">
 <rect x="4" y="14.6" width="10.5" height="1.3" fill="#333"/>
 <rect x="27.8" y="4.8" width="10" height="8.6" fill="none" stroke="#333" stroke-width="1.3"/>
 <path d="M52 3.4 L62.4 14.6 M62.4 3.4 L52 14.6" stroke="#333" stroke-width="1.3" fill="none"/>
</svg>
<!-- preset drawer icon -->
<svg style="left:242px;top:178.5px" width="28" height="29" viewBox="0 0 28 29">
 <path d="M3.45 .5 L25.15 .5 L26.6 17 L1.55 17 Z" fill="#5ab4e8"/>
 <path d="M5.3 2.4 L23.3 2.4 L24.7 17 L3.9 17 Z" fill="#fff"/>
 <rect x="7.2" y="3.8" width="13.7" height="1.9" rx=".9" fill="#f0686a"/><rect x="7.2" y="7.6" width="13.7" height="1.9" rx=".9" fill="#f6bd3a"/><rect x="7.2" y="10.9" width="13.7" height="1.8" rx=".9" fill="#56b0f0"/><rect x="7.2" y="14.4" width="13.7" height="1.8" rx=".9" fill="#3ecf9a"/>
 <path d="M.15 17.5 L27.5 17.5 L24.9 27.4 Q24.7 28.35 23.7 28.35 L4.4 28.35 Q3.5 28.35 3.25 27.4 Z" fill="#5ab4e8"/>
 <rect x="11" y="19.4" width="6.1" height="1.9" rx=".5" fill="#d4ebf9"/>
</svg>
<!-- combo -->
<div class="a btn" style="left:278px;top:179px;width:240px;height:28px"></div>
<svg style="left:285px;top:187.5px" width="14" height="12" viewBox="0 0 14 12"><rect x=".6" y=".6" width="12.8" height="10.8" fill="#fff7ee" stroke="#e8862a" stroke-width="1.2"/><path d="M3.4 .6 V11.4 M10.6 .6 V11.4" stroke="#e8862a" stroke-width="1"/><path d="M.6 3.3 H3.4 M.6 6 H3.4 M.6 8.7 H3.4 M10.6 3.3 H13.4 M10.6 6 H13.4 M10.6 8.7 H13.4" stroke="#e8862a" stroke-width=".8"/><path d="M5.8 3.8 L8.6 6 L5.8 8.2 Z" fill="#3a9ee6"/></svg>
<div class="t" style="left:303px;top:185.5px;font-size:13px;letter-spacing:0;line-height:16px;height:16px">最优化的质量和大小</div>
<svg style="left:502px;top:190.5px" width="9" height="5" viewBox="0 0 9 5"><path d="M0 0 L9 0 L4.5 5 Z" fill="#555"/></svg>
<!-- save as -->
<div class="a btn" style="left:604px;top:179px;width:140px;height:28px"></div>
<svg style="left:646px;top:185px" width="16" height="16" viewBox="0 0 16 16"><path d="M.7 1.7 Q.7 .7 1.7 .7 L12.4 .7 L15.3 3.6 L15.3 14.3 Q15.3 15.3 14.3 15.3 L1.7 15.3 Q.7 15.3 .7 14.3 Z" fill="#fff" stroke="#3a9ee6" stroke-width="1.3"/><rect x="3.8" y=".7" width="7.6" height="5.2" fill="#fff" stroke="#3a9ee6" stroke-width="1.2"/><rect x="8.2" y="1.8" width="1.8" height="3" fill="#3a9ee6"/><path d="M3 15 V9.2 H13 V15" fill="none" stroke="#3a9ee6" stroke-width="1.2"/></svg>
<div class="t" style="left:664px;top:186px;font-size:12px">另存为</div>

<!-- tabs -->
<div class="a" style="left:240px;top:241px;width:504px;height:393px;border:1px solid #c4c4c4;background:#fff"></div>
<div class="a tab" style="left:308px;width:69px"></div>
<div class="a tab" style="left:376px;width:69px"></div>
<div class="a tab" style="left:444px;width:69px"></div>
<div class="a tab" style="left:512px;width:68px"></div>
<div class="a tab" style="left:240px;width:69px;top:215px;height:27px;background:#fff;border-color:#c4c4c4"></div>
<svg style="left:252px;top:220px" width="16" height="16" viewBox="0 0 16 16"><rect width="16" height="16" rx="2.5" fill="#56a2f6"/><circle cx="8" cy="8" r="4.4" fill="none" stroke="#fff" stroke-width="1.3"/><path d="M6.9 5.9 L10 8 L6.9 10.1 Z" fill="#fff"/></svg>
<div class="t tabt" style="left:271px;top:221px">视频</div>
<svg style="left:320px;top:221px" width="16" height="16" viewBox="0 0 16 16"><rect width="16" height="16" rx="2.5" fill="#f54f8c"/><path d="M6.2 11 V4.6 L11.8 3.4 V9.8" fill="none" stroke="#fff" stroke-width="1.3"/><ellipse cx="4.9" cy="11.2" rx="1.7" ry="1.4" fill="#fff"/><ellipse cx="10.5" cy="10" rx="1.7" ry="1.4" fill="#fff"/></svg>
<div class="t tabt" style="left:340px;top:223px">音频</div>
<svg style="left:388px;top:221px" width="16" height="16" viewBox="0 0 16 16"><rect x=".8" y=".8" width="14.4" height="14.4" rx="3" fill="#eef6ff" stroke="#3f9df2" stroke-width="1.5"/><path d="M4 5 H12" stroke="#3f9df2" stroke-width="1.3"/><path d="M4 8 H12" stroke="#4fcf8f" stroke-width="1.3"/><path d="M4 11 H12" stroke="#3f9df2" stroke-width="1.3"/></svg>
<div class="t tabt" style="left:408px;top:223px">字幕</div>
<svg style="left:456px;top:221px" width="16" height="16" viewBox="0 0 16 16"><rect x=".7" y=".7" width="14.6" height="14.6" rx="2.5" fill="#e8f3fc" stroke="#8fc0e8" stroke-width="1.2"/><g stroke="#5fa4dc" stroke-width="1"><path d="M3 4.5 H13 M3 8 H13 M3 11.5 H13"/></g><g fill="#fff" stroke="#5fa4dc" stroke-width="1"><circle cx="9.5" cy="4.5" r="1.4"/><circle cx="6" cy="8" r="1.4"/><circle cx="10" cy="11.5" r="1.4"/></g></svg>
<div class="t tabt" style="left:476px;top:223px">其他</div>
<svg style="left:524px;top:221px" width="16" height="16" viewBox="0 0 16 16"><rect width="16" height="16" fill="#fff"/><g transform="translate(8 8)"><circle r="6.2" fill="#f58a1f"/><g fill="#f58a1f"><rect x="-1.6" y="-7.2" width="3.2" height="14.4" rx="1"/><rect x="-1.6" y="-7.2" width="3.2" height="14.4" rx="1" transform="rotate(45)"/><rect x="-1.6" y="-7.2" width="3.2" height="14.4" rx="1" transform="rotate(90)"/><rect x="-1.6" y="-7.2" width="3.2" height="14.4" rx="1" transform="rotate(135)"/></g></g><text x="8" y="9.6" font-size="4.4" font-weight="bold" fill="#fff" text-anchor="middle" font-family="Liberation Sans, sans-serif">NEW</text></svg>
<div class="t tabt" style="left:544px;top:223px">水印</div>

<!-- list -->
<div class="a" id="list">
<div class="r" style="top:0px;height:22px"><span class="k">大小限制</span><span class="v">关闭</span></div>
<div class="r" style="top:22px;height:22px"><span class="k">视频编码</span><span class="v">AVC(H264)</span></div>
<div class="r" style="top:44px;height:22px"><span class="k">屏幕大小</span><span class="v">&lt;1080p</span></div>
<div class="r" style="top:66px;height:22px"><span class="k">码率</span><span class="v">默认</span></div>
<div class="r" style="top:88px;height:22px"><span class="k">CRF</span><span class="v">关闭</span></div>
<div class="r" style="top:110px;height:22px"><span class="k">GPU</span><span class="v">自动检测</span></div>
<div class="r" style="top:132px;height:22px"><span class="k">每秒帧数</span><span class="v">默认</span></div>
<div class="r" style="top:154px;height:22px"><span class="k">宽高比</span><span class="v">自动</span></div>
<div class="r" style="top:176px;height:21px"><span class="k">二次编码</span><span class="v">否</span></div>
<div class="r" style="top:197px;height:22px"><span class="k">关键帧间隔</span><span class="v">默认</span></div>
<div class="r" style="top:219px;height:22px"><span class="k">反交错</span><span class="v">否</span></div>
<div class="r" style="top:241px;height:22px"><span class="k">旋转</span><span class="v">否</span></div>
<div class="r" style="top:263px;height:22px"><span class="k">左右颠倒</span><span class="v">否</span></div>
<div class="r" style="top:285px;height:22px"><span class="k">上下颠倒</span><span class="v">否</span></div>
<div class="r" style="top:307px;height:22px"><span class="k">过滤器</span><svg style="left:246px;top:2.5px" width="17" height="17" viewBox="0 0 17 17"><circle cx="8.5" cy="8.5" r="7.6" fill="#fff" stroke="#2a9ce4" stroke-width="1.1"/><text x="8.5" y="11.6" font-size="9" fill="#2a9ce4" text-anchor="middle" font-family="Liberation Sans, sans-serif">off</text></svg><span class="v" style="left:269px">关闭</span></div>
<div class="r" style="top:329px;height:21px"><span class="k">淡入效果</span><span class="v">关闭</span></div>
<div class="r" style="top:350px;height:21px"><span class="k">淡出效果</span><span class="v">关闭</span></div>
<div class="r" style="top:371px;height:22px"><span class="k">防抖 (白金功能)</span><span class="v">关闭</span></div>

<div class="a" style="left:241px;top:0;width:1px;height:390px;background:#d4d4d4"></div>
<svg style="left:23.5px;top:5.5px" width="18" height="11" viewBox="0 0 18 11"><rect x="1" y="1" width="16" height="9" fill="none" stroke="#1e96e0" stroke-width="1.8"/><g stroke="#1e96e0" stroke-width="1"><path d="M4.5 1 V5 M7 1 V3.6 M9.5 1 V5 M12 1 V3.6 M14.5 1 V5"/></g></svg>
<svg style="left:23px;top:24px" width="18" height="18" viewBox="0 0 18 18"><g stroke="#7f9cc6" stroke-width=".7"><path d="M5 0V4M7 0V4M9 0V4M11 0V4M13 0V4M5 14V18M7 14V18M9 14V18M11 14V18M13 14V18M0 5H4M0 7H4M0 9H4M0 11H4M0 13H4M14 5H18M14 7H18M14 9H18M14 11H18M14 13H18"/></g><rect x="3.5" y="3.5" width="11" height="11" fill="#a9d0f6" stroke="#6fb0ec" stroke-width="1"/><rect x="6.2" y="6.2" width="5.6" height="5.6" fill="#6fb0ec"/><rect x="7.5" y="7.5" width="3" height="3" fill="#fff"/></svg>
<svg style="left:23.5px;top:47px" width="18" height="16" viewBox="0 0 18 16"><rect x="1.2" y="1.2" width="15.6" height="10.6" rx="1.2" fill="none" stroke="#1e96e0" stroke-width="1.8"/><path d="M9 12 V14.5 M5 14.8 H13" stroke="#1e96e0" stroke-width="1.6" fill="none"/><path d="M4.5 6 V4.2 H6.5 M13.5 7 V8.8 H11.5" stroke="#1e96e0" stroke-width="1.2" fill="none"/></svg>
<svg style="left:23.5px;top:69.5px" width="18" height="14" viewBox="0 0 18 14"><g fill="none" stroke="#1e96e0" stroke-width="1.5" stroke-linecap="round"><path d="M1 3 Q5 -0.5 9 2.5 T17 2"/><path d="M1 7.5 Q5 4 9 7 T17 6.5"/><path d="M1 12 Q5 8.5 9 11.5 T17 11"/></g></svg>
<svg style="left:23px;top:88.5px" width="18" height="18" viewBox="0 0 18 18"><g fill="none" stroke="#1e96e0" stroke-width="1.1" transform="translate(9 9)"><ellipse rx="8.3" ry="3.6"/><ellipse rx="8.3" ry="3.6" transform="rotate(60)"/><ellipse rx="8.3" ry="3.6" transform="rotate(120)"/><circle r="3.2"/><circle r="1.2" fill="#1e96e0"/></g></svg>
<svg style="left:23px;top:111px" width="19" height="18" viewBox="0 0 19 18"><path d="M.8 0 V17.5" stroke="#9ccaf0" stroke-width="1.2"/><rect x="1.5" y="2.5" width="16.5" height="12" fill="#eef6fd" stroke="#8fc4f0" stroke-width="1.4"/><text x="9.8" y="10.6" font-size="5.6" font-weight="bold" fill="#3a96e0" text-anchor="middle" font-family="Liberation Sans, sans-serif">GPU</text></svg>
<svg style="left:23.5px;top:134px" width="18" height="13" viewBox="0 0 18 13"><path d="M1.5 10 A7.6 7.6 0 0 1 16.5 10" fill="none" stroke="#d4dfec" stroke-width="1.4"/><path d="M8.2 9 L10.3 1.5 L9.9 9 Z" fill="#3a86d0" stroke="#3a86d0" stroke-width=".8"/><rect x="7" y="10.6" width="4.4" height="1.3" fill="#8aa8cc"/></svg>
<svg style="left:24.5px;top:156.5px" width="15" height="15" viewBox="0 0 15 15"><rect x=".9" y=".9" width="13.2" height="13.2" fill="#fff" stroke="#1e96e0" stroke-width="1.6"/><rect x="1.7" y="1.7" width="11.6" height="2.6" fill="#9fd0f4"/><rect x="1.7" y="10.7" width="11.6" height="2.6" fill="#9fd0f4"/><path d="M7.5 5 L9.2 6.8 H5.8 Z M7.5 10 L9.2 8.2 H5.8 Z" fill="#1e96e0"/><path d="M7.5 6 V9" stroke="#1e96e0" stroke-width="1"/></svg>
<svg style="left:23.5px;top:176.5px" width="17" height="18" viewBox="0 0 17 18"><path d="M8.5 0 L11 2 L15.6 3.4 L15 7 L16.6 9 L15 11 L15.6 14.6 L11 16 L8.5 18 L6 16 L1.4 14.6 L2 11 L.4 9 L2 7 L1.4 3.4 L6 2 Z" fill="#1e96e0"/><text x="8.5" y="13.2" font-size="11.5" font-weight="bold" fill="#fff" text-anchor="middle" font-family="Liberation Sans, sans-serif">2</text></svg>
<svg style="left:23px;top:200px" width="18" height="16" viewBox="0 0 18 16"><path d="M1 0 V16 M16.5 0 V16" stroke="#8fa4c4" stroke-width="1"/><rect x="6" y="1" width="5.6" height="14" fill="#2d8fd2"/></svg>
<svg style="left:23.5px;top:222px" width="18" height="16" viewBox="0 0 18 16"><g fill="#1e96e0"><rect x="0" y="1" width="8" height="2" fill="#4aa8f0"/><rect x="4" y="5" width="6" height="1.8" fill="#4aa8f0"/><rect x="10" y="5" width="6" height="2"/><rect x="3" y="9" width="6" height="1.8" fill="#4aa8f0"/><rect x="10" y="9" width="7" height="2"/><rect x="7" y="13" width="10" height="2"/></g></svg>
<svg style="left:23px;top:243px" width="18" height="18" viewBox="0 0 18 18"><g fill="none" stroke="#1e96e0" stroke-width="1.6" stroke-linecap="round"><path d="M5.5 2.5 A7.2 7.2 0 0 0 4 14.5"/><path d="M12.5 15 A7.2 7.2 0 0 0 14 3"/><path d="M1 12.5 L4 15 L5.5 11.5 M17 5 L14 2.5 L12.5 6"/><path d="M9 6.3 L11.5 8.8 L9 11.3 L6.5 8.8 Z" stroke-width="1.3"/></g><circle cx="9" cy="8.8" r=".9" fill="#1e96e0"/></svg>
<svg style="left:24.5px;top:266px" width="15" height="16" viewBox="0 0 15 16"><path d="M6 2.5 V14 H.8 Z" fill="#b5dbf6"/><path d="M9 2.5 V14 H14.2 Z" fill="#1e96e0"/><path d="M7.5 .5 V15.5" stroke="#b5dbf6" stroke-width="1"/></svg>
<svg style="left:24.5px;top:288px" width="16" height="16" viewBox="0 0 16 16"><path d="M2.5 6 H14 L2.5 .8 Z" fill="#b5dbf6"/><path d="M2.5 9 H14 L2.5 14.2 Z" fill="#1e96e0"/><path d="M.5 7.5 H15.5" stroke="#b5dbf6" stroke-width="1"/></svg>
<svg style="left:24.5px;top:311px" width="16" height="14" viewBox="0 0 16 14"><g fill="#1e96e0"><rect x="6.4" y=".5" width="1.2" height="12.5"/><rect x="9.6" y=".5" width="1.2" height="12.5"/><rect x="6.4" y=".5" width="2.4" height="1.2"/><rect x="8.4" y="11.8" width="2.4" height="1.2"/><circle cx="1.2" cy="3.2" r="1"/><circle cx="3.6" cy="1.2" r=".8"/><circle cx="3.4" cy="7" r="1"/><circle cx="1.4" cy="10.6" r=".9"/><circle cx="3.8" cy="4" r=".6"/><rect x="13" y="3" width="1.1" height="1.6"/><rect x="13" y="6" width="1.1" height="1.6"/><rect x="13" y="9" width="1.1" height="1.6"/></g></svg>
<svg style="left:26px;top:332px" width="14" height="14" viewBox="0 0 14 14"><path d="M6.6 0 L12.6 3.3 V10 L6.6 13.4 L.6 10 V3.3 Z" fill="#1e96e0"/></svg>
<svg style="left:26px;top:354.5px" width="13" height="12" viewBox="0 0 13 12"><path d="M3.6 .6 H9.4 L12.4 5.8 L9.4 11 H3.6 L.6 5.8 Z" fill="#6cbcf2" stroke="#3a9ee6" stroke-width="1"/></svg>
<svg style="left:23px;top:373px" width="19" height="18" viewBox="0 0 19 18"><path d="M4 .8 H15 V17 H4 Z" fill="#fff" stroke="#e23b3b" stroke-width="1.5"/><path d="M.8 1 Q3 9 2 17 M17 1 Q15.5 9 18.2 17" fill="none" stroke="#f2aeb0" stroke-width="1.6"/></svg>

<div class="a" style="left:484px;top:0;width:15px;height:390px;background:#fdfdfd;border-left:1px solid #d0d0d0"></div>
<div class="a" style="left:485px;top:13px;width:14px;height:1px;background:#dcdcdc"></div>
<div class="a" style="left:485px;top:321px;width:14px;height:53px;background:#e8e8e8"></div>
<svg style="left:488px;top:4px" width="8" height="5" viewBox="0 0 8 5"><path d="M0 5 L4 0 L8 5 Z" fill="#555"/></svg>
<svg style="left:488px;top:378px" width="8" height="5" viewBox="0 0 8 5"><path d="M0 0 L8 0 L4 5 Z" fill="#555"/></svg>
</div>

<!-- bottom buttons -->
<div class="a btn" style="left:240px;top:641px;width:120px;height:28px"></div>
<svg style="left:274px;top:643px" width="25" height="23" viewBox="0 0 25 23"><path d="M.3 9 L10 .6 L10 5.2 Q22.5 5.2 24.6 22.8 Q18.5 13.2 10 13.4 L10 17.6 Z" fill="#2bb89a"/></svg>
<div class="t" style="left:299px;top:648.5px;font-size:12px">取消</div>
<div class="a btn" style="left:432px;top:641px;width:120px;height:28px"></div>
<svg style="left:466px;top:645.5px" width="24" height="19" viewBox="0 0 24 19"><path d="M5.8 .7 L13.6 .7 L19.2 5.4 L19.2 18.3 L5.8 18.3 Z" fill="#fff" stroke="#56a8ec" stroke-width="1.3" stroke-linejoin="round"/><path d="M13.6 .7 V5.4 H19.2" fill="none" stroke="#56a8ec" stroke-width="1.1"/><rect x="0" y="7.8" width="24" height="6.8" fill="#56a8ec"/><text x="12" y="13" font-size="4.6" font-weight="bold" fill="#fff" text-anchor="middle" font-family="Liberation Sans, sans-serif" letter-spacing=".2">DEFAULT</text></svg>
<div class="t" style="left:491px;top:648.5px;font-size:12px">默认</div>
<div class="a btn" style="left:624px;top:641px;width:120px;height:28px"></div>
<svg style="left:660px;top:644.5px" width="21" height="21" viewBox="0 0 21 21"><circle cx="10.5" cy="10.5" r="9.5" fill="#fff" stroke="#2a9ce4" stroke-width="1.5"/><path d="M5.6 10.4 L9.2 14.2 L15.6 6.8" fill="none" stroke="#2a9ce4" stroke-width="1.6"/></svg>
<div class="t" style="left:684px;top:648.5px;font-size:12px">确定</div>
<svg style="left:743px;top:668px" width="10" height="10" viewBox="0 0 10 10"><g fill="#d2d2d2"><rect x="7" y="1" width="1.4" height="1.4"/><rect x="4" y="4" width="1.4" height="1.4"/><rect x="7" y="4" width="1.4" height="1.4"/><rect x="1" y="7" width="1.4" height="1.4"/><rect x="4" y="7" width="1.4" height="1.4"/><rect x="7" y="7" width="1.4" height="1.4"/></g></svg>

</body>
</html>
